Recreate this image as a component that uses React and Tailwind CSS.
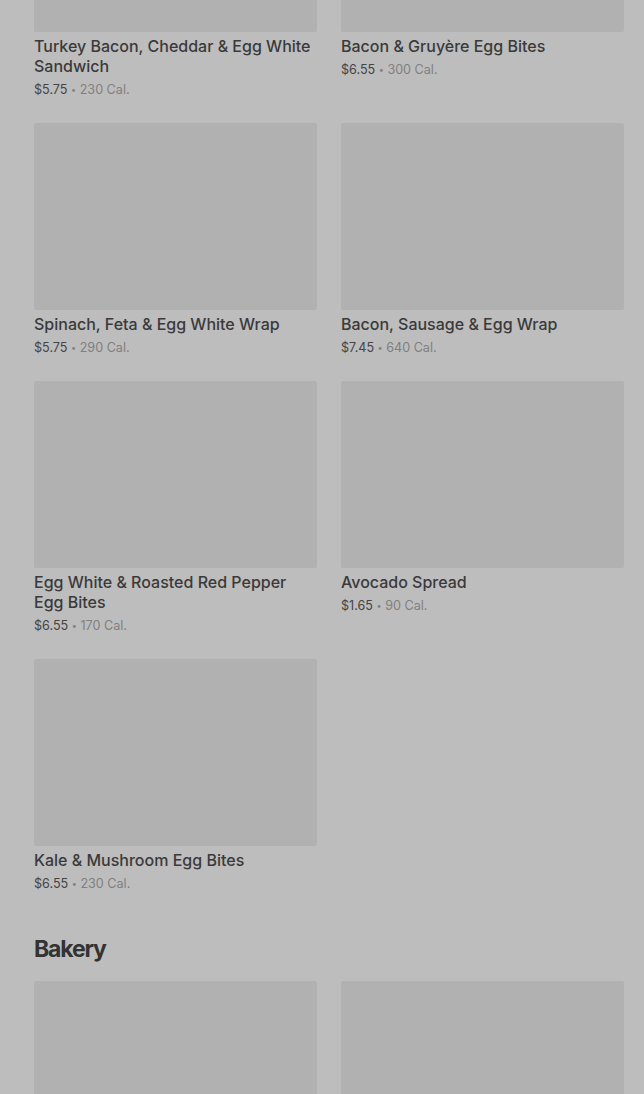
const items = [
  { name: 'Turkey Bacon, Cheddar & Egg White Sandwich', price: '$5.75', cal: '230 Cal.' },
  { name: 'Bacon & Gruyère Egg Bites', price: '$6.55', cal: '300 Cal.' },
  { name: 'Spinach, Feta & Egg White Wrap', price: '$5.75', cal: '290 Cal.' },
  { name: 'Bacon, Sausage & Egg Wrap', price: '$7.45', cal: '640 Cal.' },
  { name: 'Egg White & Roasted Red Pepper Egg Bites', price: '$6.55', cal: '170 Cal.' },
  { name: 'Avocado Spread', price: '$1.65', cal: '90 Cal.' },
  { name: 'Kale & Mushroom Egg Bites', price: '$6.55', cal: '230 Cal.' },
]

function Card({ item }) {
  return (
    <div className="flex flex-col">
      <div className="h-[187px] bg-[#b1b1b1] rounded-[2px]" />
      <div className="mt-1 text-[16px] leading-5 font-medium text-[#3a3a3a]">{item.name}</div>
      <div className="mt-1 text-[12.6px] leading-5 text-[#444]">
        {item.price} <span className="text-[#808080]"><span className="text-[9px] align-[1px]">•</span> {item.cal}</span>
      </div>
    </div>
  )
}

export default function App() {
  return (
    <div className="h-[1094px] overflow-hidden bg-[#bdbdbd] pl-[34px] pr-[20px]" style={{ fontFamily: 'Inter, "Noto Sans", sans-serif' }}>
      <div className="grid grid-cols-2 gap-x-6 gap-y-[23px] -mt-[155px]">
        {items.map((it, i) => <Card key={i} item={it} />)}
      </div>
      <h2 className="mt-10 text-[23px] leading-[30px] font-bold tracking-tighter text-[#333]">Bakery</h2>
      <div className="grid grid-cols-2 gap-x-6 mt-[17px]">
        <div className="h-[187px] bg-[#b1b1b1] rounded-[2px]" />
        <div className="h-[187px] bg-[#b1b1b1] rounded-[2px]" />
      </div>
    </div>
  )
}
